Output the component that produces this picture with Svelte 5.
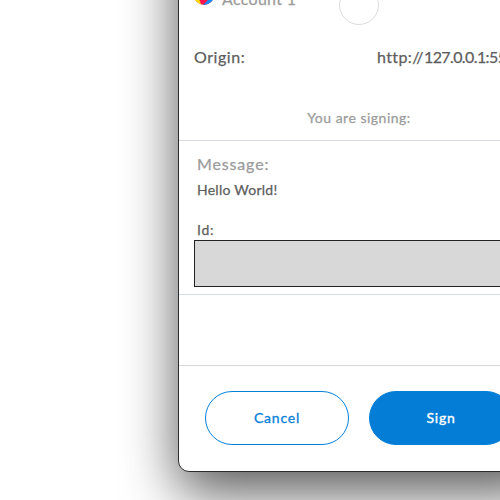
<script>
  const protocol = 'http://';
  const host = '127.0.0.1:55';
  const message = 'Hello World!';
</script>

<div class="desktop">
  <main class="window">
    <header>
      <svg class="avatar" width="20" height="20" viewBox="0 0 20 20">
        <defs><clipPath id="disc"><circle cx="10" cy="10" r="10" /></clipPath></defs>
        <g clip-path="url(#disc)">
          <rect width="20" height="20" fill="#ff1450" />
          <path d="M-1 8L5 14L8 22H-1Z" fill="#fae100" />
          <path d="M8 21L21 8V22Z" fill="#1689f5" />
        </g>
      </svg>
      <span class="account">Account 1</span>
      <span class="ring"></span>
    </header>
    <section class="origin">
      <span class="label">Origin:</span>
      <span class="url">{protocol}<span class="host">{host}</span></span>
    </section>
    <section class="intro"><span>You are signing:</span></section>
    <section class="message">
      <h2>Message:</h2>
      <p class="text">{message}</p>
      <p class="id">Id:</p>
      <div class="redacted"></div>
    </section>
    <section class="spacer"></section>
    <footer>
      <button class="cancel"><span>Cancel</span></button>
      <button class="sign"><span>Sign</span></button>
    </footer>
  </main>
</div>

<style>
  :global(body) { margin: 0; background: #fff; }
  .desktop {
    width: 500px;
    height: 500px;
    overflow: hidden;
    display: flex;
    padding-left: 178px;
    box-sizing: border-box;
    background: #fff;
  }
  .window {
    flex: none;
    width: 370px;
    height: 572px;
    margin-top: -100px;
    padding-top: 99px;
    box-sizing: border-box;
    border: 1.5px solid #2d2d2d;
    border-radius: 11px;
    background: #fff;
    box-shadow: 0 20px 54px 0 rgba(0, 0, 0, 0.66);
    font-family: Lato, sans-serif;
    font-weight: 400;
    color: #5d5d5d;
    -webkit-text-stroke: 0.25px currentColor;
  }
  header, .origin, .intro, footer { display: flex; box-sizing: border-box; }
  header { height: 28px; position: relative; }
  .avatar { flex: none; margin: -15px 0 0 15px; }
  .account { margin: -11px 0 0 8px; font-size: 16px; line-height: 20px; color: #9b9b9b; letter-spacing: 0.3px; }
  .ring {
    position: absolute;
    left: 160px;
    top: -15px;
    width: 38px;
    height: 38px;
    border: 1px solid #dcdcdc;
    border-radius: 50%;
    background: #fff;
  }
  .origin { height: 60px; padding-top: 19px; font-size: 16px; line-height: 20px; white-space: nowrap; }
  .label { width: 183px; box-sizing: border-box; flex: none; padding-left: 15px; letter-spacing: 0.55px; }
  .url { margin-left: 15px; letter-spacing: 0.4px; }
  .host { letter-spacing: -0.6px; }
  .intro {
    height: 53px;
    padding: 21px 8px 0 0;
    justify-content: center;
    border-bottom: 1px solid #d8dce1;
    font-size: 14px;
    line-height: 18px;
    color: #9b9b9b;
    letter-spacing: 0.5px;
  }
  .message { height: 153px; border-bottom: 1px solid #d5dde3; }
  h2, p { margin: 0; padding-left: 18px; font-weight: 400; }
  h2 { padding-top: 12px; font-size: 16px; line-height: 22px; color: #9b9b9b; letter-spacing: 0.85px; }
  p { font-size: 14px; line-height: 18px; letter-spacing: 0.25px; }
  .text { padding-top: 6px; }
  .id { padding-top: 22px; letter-spacing: 0.7px; }
  .redacted { height: 45px; margin: 1px 0 0 15px; width: 330px; border: 1px solid #222; background: #d8d8d8; }
  .spacer { height: 70px; border-bottom: 1px solid #d5d8dc; }
  footer { padding: 25px 0 0 26px; gap: 20px; }
  button {
    width: 144px;
    height: 54px;
    padding: 0 0 2px;
    box-sizing: border-box;
    border: 1px solid #0580d8;
    border-radius: 27px;
    font: 400 14px Lato, sans-serif;
    letter-spacing: 0.8px;
    flex: none;
  }
  .cancel { background: #fff; color: #0580d8; -webkit-text-stroke: 0.3px #0580d8; }
  .sign { background: #037dd6; color: #fff; -webkit-text-stroke: 0.35px #fff; }
</style>
